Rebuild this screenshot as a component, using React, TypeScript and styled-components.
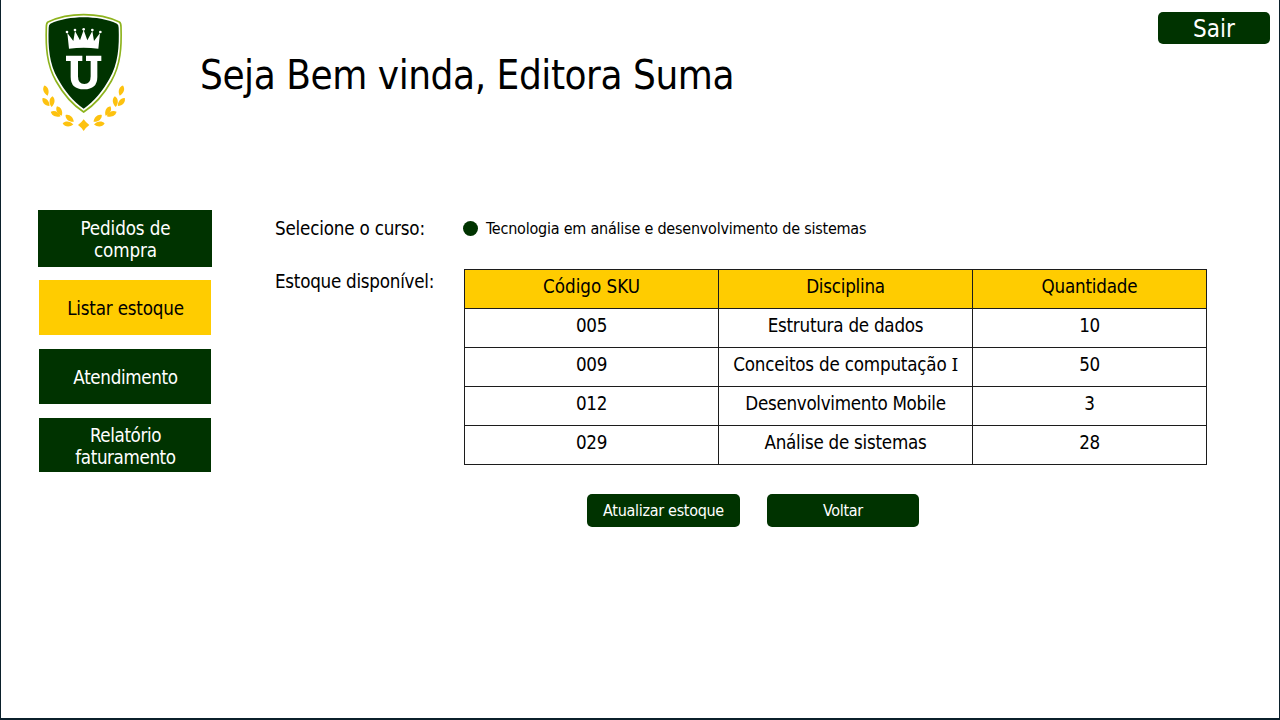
import React from 'react';
import styled, { createGlobalStyle } from 'styled-components';

const GREEN = '#003300';
const YELLOW = '#ffcc00';

const GlobalStyle = createGlobalStyle`
  * { box-sizing: border-box; }
  body { margin: 0; background: #fff; color: #000; font-family: "DejaVu Sans Condensed", "DejaVu Sans", sans-serif; }
  button { font-family: inherit; border: 0; padding: 0; cursor: pointer; }
`;

const Page = styled.div`
  width: 1280px;
  height: 720px;
  overflow: hidden;
  border: 1px solid #0b202b;
  border-top: 0;
  border-bottom-width: 2px;
`;

const Header = styled.header`
  display: flex;
  align-items: flex-start;
  height: 210px;
  padding: 5px 9px 0 29px;
`;

const Logo = styled.svg`
  width: 110px;
  height: 135px;
  flex: none;
`;

const Title = styled.h1`
  flex: 1;
  margin: 42px 0 0 60px;
  font-size: 40px;
  line-height: 56px;
  font-weight: 400;
  letter-spacing: -0.44px;
`;

const LogoutButton = styled.button`
  width: 112px;
  height: 32px;
  margin-top: 7px;
  padding-top: 1px;
  border-radius: 5px;
  background: ${GREEN};
  color: #fff;
  font-size: 24px;
  line-height: 32px;
`;

const Body = styled.div`
  display: flex;
  align-items: flex-start;
`;

const Nav = styled.nav`
  display: flex;
  flex-direction: column;
  align-items: center;
  width: 174px;
  margin-left: 37px;
`;

const NavItem = styled.button<{ $active?: boolean; $tracking: number; $wide?: boolean; $height: number; $gap: number; $drop?: number }>`
  width: ${p => (p.$wide ? 174 : 172)}px;
  height: ${p => p.$height}px;
  margin-bottom: ${p => p.$gap}px;
  padding: ${p => p.$drop ?? 2}px 23px 0 24px;
  background: ${p => (p.$active ? YELLOW : GREEN)};
  color: ${p => (p.$active ? '#000' : '#fff')};
  font-size: 18.67px;
  line-height: 22px;
  letter-spacing: ${p => p.$tracking}px;
`;

const Content = styled.main`
  margin-left: 63px;
`;

const Field = styled.div`
  display: flex;
  align-items: flex-start;
`;

const Label = styled.span<{ $tracking: number }>`
  width: 188px;
  padding-top: 1px;
  font-size: 18.67px;
  line-height: 24px;
  letter-spacing: ${p => p.$tracking}px;
`;

const CourseField = styled(Field)`
  height: 59px;
  padding-top: 6px;
`;

const StockField = styled(Field)`
  gap: 1px;
`;

const Course = styled.span`
  display: flex;
  align-items: center;
  gap: 8px;
  height: 24px;
  font-size: 16px;
  letter-spacing: -0.22px;
`;

const Dot = styled.i`
  width: 15px;
  height: 15px;
  border-radius: 50%;
  background: ${GREEN};
`;

const Table = styled.table`
  width: 743px;
  border-collapse: collapse;
  table-layout: fixed;
  font-size: 18.67px;
  text-align: center;
`;

const Col = styled.col<{ $w: number }>`
  width: ${p => p.$w}px;
`;

const Cell = styled.td<{ $tracking?: number }>`
  height: 39px;
  padding: 0 0 4px;
  border: 1px solid #1c1c1c;
  line-height: 22px;
  white-space: nowrap;
  letter-spacing: ${p => p.$tracking ?? 0}px;
`;

const HeadCell = styled(Cell)`
  background: ${YELLOW};
  font-weight: 400;
`;

const Numeral = styled.span`
  font-family: "Noto Sans", sans-serif;
  line-height: 0;
`;

const Actions = styled.div`
  display: flex;
  gap: 27px;
  margin: 29px 0 0 312px;
`;

const ActionButton = styled.button<{ $w: number }>`
  width: ${p => p.$w}px;
  height: 33px;
  padding-top: 1px;
  border-radius: 5px;
  background: ${GREEN};
  color: #fff;
  font-size: 16px;
  line-height: 32px;
  letter-spacing: -0.3px;
`;

const leaves = [
  [48, 257, 72],
  [66, 290, 95],
  [48, 291, 50],
  [77, 327, 24],
  [88, 318, 63],
  [114, 357, 6],
  [119, 340, 40],
];

const LEAF = 'M-16 0C-9-10 6-10 16 0C6 10-9 10-16 0Z';

function Crest() {
  const side = leaves.map(([x, y, a]) => (
    <path key={`${x}-${y}`} d={LEAF} transform={`translate(${x} ${y}) rotate(${a})`} />
  ));
  return (
    <Logo viewBox="0 0 330 405">
      <path
        d="M161 29C197 29 236 36 268 51Q273 54 273 66C275 125 272 179 244 228C225 262 195 299 161 321C127 299 97 262 78 228C50 179 47 125 49 66Q49 54 54 51C86 36 125 29 161 29Z"
        fill="#fff"
        stroke="#8db31d"
        strokeWidth="5"
      />
      <path
        d="M161 37C196 37 232 43 261 56Q266 59 266 68C268 126 265 175 238 222C220 254 193 290 161 311C129 290 102 254 84 222C57 175 54 126 56 68Q56 59 61 56C90 43 126 37 161 37Z"
        fill={GREEN}
      />
      <g fill="#fff">
        <path d="M117 131L112 84L130 108L135 78L150 106L161 75L172 106L187 78L192 108L210 84L205 131Q161 125 117 131Z" />
        <circle cx="111" cy="81" r="4" />
        <circle cx="135" cy="75" r="4" />
        <circle cx="161" cy="73" r="4" />
        <circle cx="187" cy="75" r="4" />
        <circle cx="211" cy="81" r="4" />
        <path d="M108 152H157V168H144V214Q144 237 163 237Q182 237 182 214V168H168V152H214V168H202V216Q202 253 162 253Q122 253 122 216V168H108Z" />
      </g>
      <g fill="#fdc20f">
        {side}
        <g transform="translate(322 0) scale(-1 1)">{side}</g>
        <path d="M161 343Q168 353 178 360Q168 367 161 378Q154 367 144 360Q154 353 161 343Z" />
      </g>
    </Logo>
  );
}

const rows: { sku: string; name: React.ReactNode; tracking: number; qty: number }[] = [
  { sku: '005', name: 'Estrutura de dados', tracking: -0.25, qty: 10 },
  { sku: '009', name: <>Conceitos de computação <Numeral>I</Numeral></>, tracking: -0.2, qty: 50 },
  { sku: '012', name: 'Desenvolvimento Mobile', tracking: -0.3, qty: 3 },
  { sku: '029', name: 'Análise de sistemas', tracking: -0.25, qty: 28 },
];

export default function App() {
  return (
    <Page>
      <GlobalStyle />
      <Header>
        <Crest />
        <Title>Seja Bem vinda, Editora Suma</Title>
        <LogoutButton>Sair</LogoutButton>
      </Header>
      <Body>
        <Nav>
          <NavItem $wide $height={57} $gap={13} $tracking={-0.1}>Pedidos de compra</NavItem>
          <NavItem $active $height={55} $gap={14} $tracking={-0.2}>Listar estoque</NavItem>
          <NavItem $height={55} $gap={14} $tracking={-0.35}>Atendimento</NavItem>
          <NavItem $height={54} $gap={0} $tracking={-0.4} $drop={4}>Relatório faturamento</NavItem>
        </Nav>
        <Content>
          <CourseField>
            <Label $tracking={-0.2}>Selecione o curso:</Label>
            <Course><Dot />Tecnologia em análise e desenvolvimento de sistemas</Course>
          </CourseField>
          <StockField>
            <Label $tracking={-0.26}>Estoque disponível:</Label>
            <Table>
              <colgroup><Col $w={254} /><Col $w={254} /><Col $w={234} /></colgroup>
              <thead>
                <tr>
                  <HeadCell as="th">Código SKU</HeadCell>
                  <HeadCell as="th" $tracking={-0.25}>Disciplina</HeadCell>
                  <HeadCell as="th" $tracking={-0.2}>Quantidade</HeadCell>
                </tr>
              </thead>
              <tbody>
                {rows.map(r => (
                  <tr key={r.sku}>
                    <Cell $tracking={-0.4}>{r.sku}</Cell>
                    <Cell $tracking={r.tracking}>{r.name}</Cell>
                    <Cell $tracking={-0.4}>{r.qty}</Cell>
                  </tr>
                ))}
              </tbody>
            </Table>
          </StockField>
          <Actions>
            <ActionButton $w={153}>Atualizar estoque</ActionButton>
            <ActionButton $w={152}>Voltar</ActionButton>
          </Actions>
        </Content>
      </Body>
    </Page>
  );
}
